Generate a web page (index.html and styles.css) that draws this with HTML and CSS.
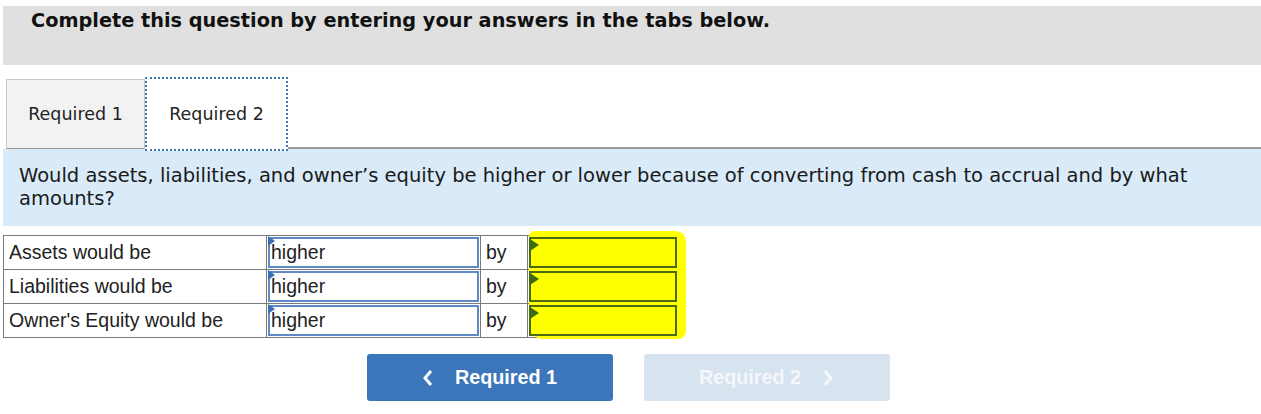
FILE: index.html
```html
<!DOCTYPE html>
<html>
<head>
<meta charset="utf-8">
<link rel="stylesheet" href="styles.css">
</head>
<body>
<div class="page">
  <div class="header">Complete this question by entering your answers in the tabs below.</div>
  <div class="tabs">
    <div class="tab">Required 1</div>
    <div class="tab active">Required 2</div>
    <div class="tabs-rest"></div>
  </div>
  <div class="question">Would assets, liabilities, and owner’s equity be higher or lower because of converting from cash to accrual and by what amounts?</div>
  <div class="grid-wrap">
    <table class="grid">
      <tr>
        <td class="label">Assets would be</td>
        <td class="sel-cell"><div class="select"><span class="flag"></span>higher</div></td>
        <td class="by">by</td>
        <td class="in-cell"><div class="input"><span class="flag"></span></div></td>
      </tr>
      <tr>
        <td class="label">Liabilities would be</td>
        <td class="sel-cell"><div class="select"><span class="flag"></span>higher</div></td>
        <td class="by">by</td>
        <td class="in-cell"><div class="input"><span class="flag"></span></div></td>
      </tr>
      <tr>
        <td class="label">Owner's Equity would be</td>
        <td class="sel-cell"><div class="select"><span class="flag"></span>higher</div></td>
        <td class="by">by</td>
        <td class="in-cell"><div class="input"><span class="flag"></span></div></td>
      </tr>
    </table>
    <div class="highlight"></div>
  </div>
  <div class="nav">
    <div class="btn primary"><svg class="chev" width="12" height="18" viewBox="0 0 12 18"><path d="M9 2 L3 9 L9 16" fill="none" stroke="#ffffff" stroke-width="3"/></svg>Required 1</div>
    <div class="btn disabled">Required 2<svg class="chev right" width="12" height="18" viewBox="0 0 12 18"><path d="M3 2 L9 9 L3 16" fill="none" stroke="#f4f7fb" stroke-width="3"/></svg></div>
  </div>
</div>
</body>
</html>
```

FILE: styles.css
```css
html, body {
  margin: 0;
  padding: 0;
  background: #ffffff;
}
.page {
  padding-left: 3px;
  font-family: "DejaVu Sans", Verdana, sans-serif;
  color: #1a1a1a;
}
.header {
  margin-top: 6px;
  height: 59px;
  box-sizing: border-box;
  background: #e0e0e0;
  padding: 3px 0 0 28px;
  font-weight: bold;
  font-size: 19.3px;
  color: #111;
}
.tabs {
  margin-top: 12px;
  display: flex;
  align-items: flex-end;
  padding-left: 3px;
}
.tab {
  width: 139px;
  height: 70px;
  box-sizing: border-box;
  background: #f2f2f2;
  border: 1px solid #c8c8c8;
  border-bottom: 1px solid #999;
  display: flex;
  align-items: center;
  justify-content: center;
  font-size: 17.5px;
  color: #222;
}
.tab.active {
  width: 143px;
  height: 74px;
  background: #fff;
  border: 2px dotted #3a77bb;
  margin-bottom: -2px;
  position: relative;
  z-index: 1;
  padding-top: 0;
}
.tabs-rest {
  flex: 1;
  border-bottom: 2px solid #999;
  height: 0;
}
.question {
  background: #d9eaf8;
  padding: 15px 40px 0 16px;
  font-size: 19.5px;
  line-height: 23px;
  color: #1a1a1a;
  height: 77px;
  box-sizing: border-box;
}
.grid-wrap {
  position: relative;
  margin-top: 9px;
  width: 676px;
}
.grid {
  border-collapse: collapse;
  font-family: "Liberation Sans", Arial, sans-serif;
  font-size: 19.5px;
  color: #222;
  position: relative;
}
.grid td {
  border: 1px solid #7a7a7a;
  height: 33px;
  padding: 0;
}
.label {
  width: 257px;
  padding-left: 5px !important;
}
.sel-cell {
  width: 213px;
}
.select {
  position: relative;
  margin: 0 1px;
  height: 31px;
  box-sizing: border-box;
  border: 2px solid #5f8ac6;
  padding-left: 1px;
  line-height: 27px;
  background: #fff;
}
.flag {
  position: absolute;
  width: 0;
  height: 0;
  border-left: 7px solid #3a6fb5;
  border-top: 5px solid transparent;
  border-bottom: 5px solid transparent;
  top: -3px;
  left: -2px;
}
.by {
  width: 47px;
  padding-left: 5px !important;
  box-sizing: border-box;
}
.in-cell {
  width: 150px;
}
.input {
  position: relative;
  z-index: 2;
  margin: 0 1px;
  height: 31px;
  box-sizing: border-box;
  border: 2px solid #4b6b10;
  background: #ffff00;
}
.input .flag {
  border-left: 9px solid #3d6b0c;
  border-top: 6px solid transparent;
  border-bottom: 6px solid transparent;
  top: 0;
  left: -1px;
}
.highlight {
  position: absolute;
  left: 526px;
  top: -4px;
  width: 157px;
  height: 108px;
  background: #ffff00;
  border-radius: 6px 10px 8px 14px;
  z-index: 1;
}
.nav {
  margin-top: 16px;
  display: flex;
  justify-content: center;
  gap: 31px;
  padding-right: 8px;
  font-family: "Liberation Sans", Arial, sans-serif;
}
.btn {
  width: 246px;
  height: 47px;
  border-radius: 3px;
  display: flex;
  align-items: center;
  justify-content: center;
  font-weight: bold;
  font-size: 19.8px;
  color: #fff;
}
.btn.primary {
  background: #3a76b9;
}
.btn.disabled {
  background: #d8e3f0;
  color: #f4f7fb;
}
.chev {
  margin-right: 21px;
}
.chev.right {
  margin-right: 0;
  margin-left: 21px;
}
```
